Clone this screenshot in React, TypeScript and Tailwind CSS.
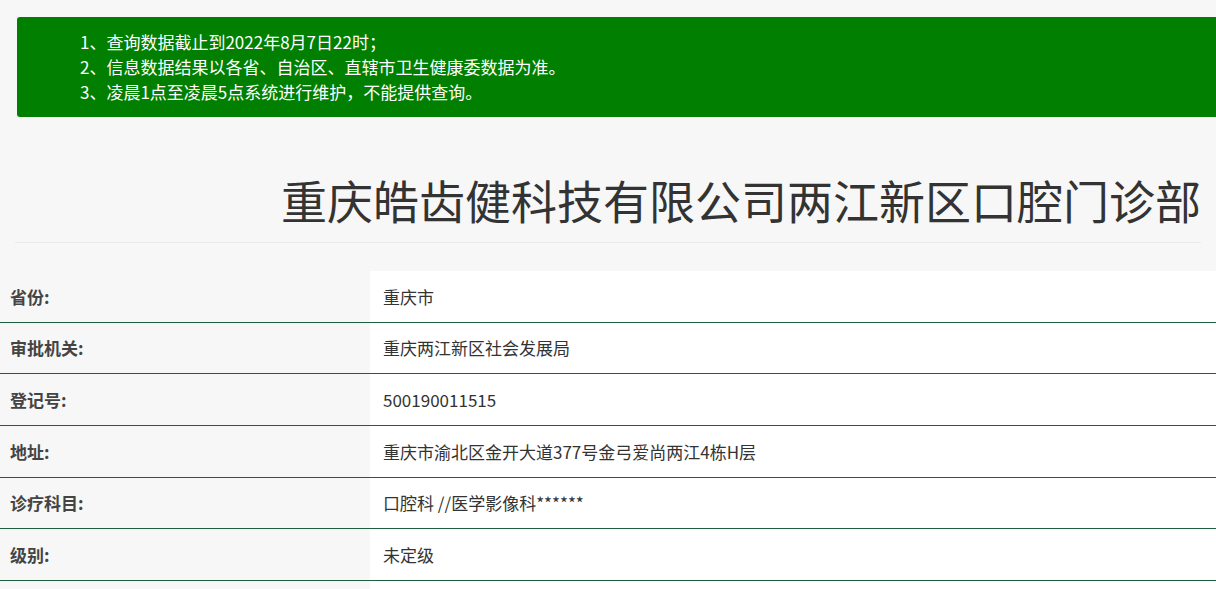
const rows = [
  ["省份:", "重庆市"],
  ["审批机关:", "重庆两江新区社会发展局"],
  ["登记号:", "500190011515"],
  ["地址:", "重庆市渝北区金开大道377号金弓爱尚两江4栋H层"],
  ["诊疗科目:", "口腔科 //医学影像科******"],
  ["级别:", "未定级"],
  ["", ""],
];

export default function App() {
  return (
    <div
      className="h-[589px] bg-[#f7f7f7] overflow-hidden text-[#333]"
      style={{ fontFamily: '"Microsoft YaHei", "Noto Sans CJK SC", sans-serif' }}
    >
      <div className="pl-[17px] pt-[17px]">
        <div className="bg-[#007f00] text-white rounded-l-[3px] w-[1220px] h-[100px] pl-[63px] pt-[12px] text-[17px] leading-[25px]">
          <p>1、查询数据截止到2022年8月7日22时；</p>
          <p>2、信息数据结果以各省、自治区、直辖市卫生健康委数据为准。</p>
          <p>3、凌晨1点至凌晨5点系统进行维护，不能提供查询。</p>
        </div>
      </div>
      <div className="mx-[15px] border-b border-[#eaeaea] h-[126px] flex items-center justify-end pt-[38px] pb-[0px]">
        <h1 className="text-[46px] font-normal leading-none text-[#333]">重庆皓齿健科技有限公司两江新区口腔门诊部</h1>
      </div>
      <div className="mt-[28px]">
        {rows.map(([k, v], i) => (
          <div key={i} className="flex h-[51.7px] border-b border-[#1f5f3f] text-[17px]">
            <div className="w-[370px] pl-[10px] flex items-center font-bold text-[#444]">{k}</div>
            <div className="flex-1 bg-white pl-[13px] flex items-center">{v}</div>
          </div>
        ))}
      </div>
    </div>
  );
}
